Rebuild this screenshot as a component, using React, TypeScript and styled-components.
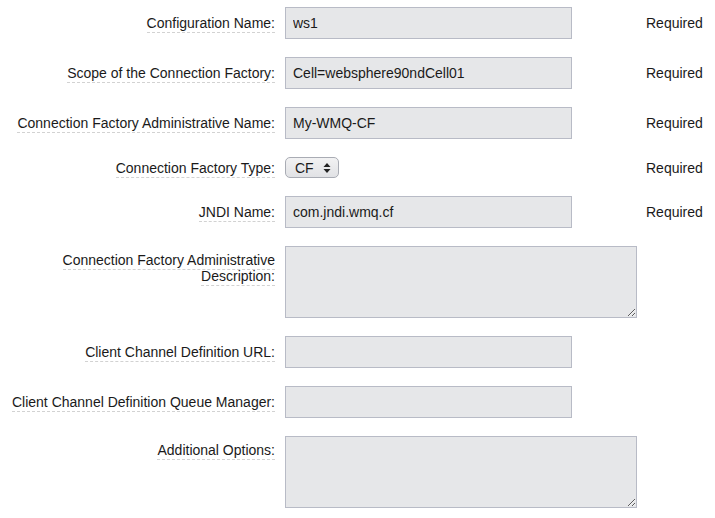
import React from 'react';
import styled, { createGlobalStyle } from 'styled-components';

const GlobalStyle = createGlobalStyle`
  body {
    margin: 0;
    background: #ffffff;
    font-family: "Liberation Sans", Arial, Helvetica, sans-serif;
    font-size: 14px;
    color: #1a1a1a;
  }
`;

type Field = {
  label: string;
  kind: 'input' | 'textarea' | 'select';
  value?: string;
  required?: boolean;
};

const fields: Field[] = [
  { label: 'Configuration Name:', kind: 'input', value: 'ws1', required: true },
  { label: 'Scope of the Connection Factory:', kind: 'input', value: 'Cell=websphere90ndCell01', required: true },
  { label: 'Connection Factory Administrative Name:', kind: 'input', value: 'My-WMQ-CF', required: true },
  { label: 'Connection Factory Type:', kind: 'select', value: 'CF', required: true },
  { label: 'JNDI Name:', kind: 'input', value: 'com.jndi.wmq.cf', required: true },
  { label: 'Connection Factory Administrative Description:', kind: 'textarea' },
  { label: 'Client Channel Definition URL:', kind: 'input' },
  { label: 'Client Channel Definition Queue Manager:', kind: 'input' },
  { label: 'Additional Options:', kind: 'textarea' },
];

const App: React.FC = () => {
  return (
    <>
      <GlobalStyle />
      <Form>
        {fields.map((f) => (
          <Row key={f.label} $top={f.kind === 'textarea'}>
            <Label $top={f.kind === 'textarea'}>
              <LabelText>{f.label}</LabelText>
            </Label>
            <FieldCell>
              {f.kind === 'input' && <TextInput defaultValue={f.value} />}
              {f.kind === 'textarea' && <TextArea />}
              {f.kind === 'select' && (
                <SelectWrap>
                  <Select defaultValue={f.value}>
                    <option>CF</option>
                    <option>QCF</option>
                    <option>TCF</option>
                  </Select>
                  <Arrows width="8" height="12" viewBox="0 0 8 12">
                    <path d="M4 1 L7.5 5 L0.5 5 Z" fill="#222" />
                    <path d="M4 11 L7.5 7 L0.5 7 Z" fill="#222" />
                  </Arrows>
                </SelectWrap>
              )}
            </FieldCell>
            <RequiredCell>{f.required ? 'Required' : ''}</RequiredCell>
          </Row>
        ))}
      </Form>
    </>
  );
};

const Form = styled.form`
  display: flex;
  flex-direction: column;
  gap: 18px;
  padding-top: 7px;
`;

const Row = styled.div<{ $top: boolean }>`
  display: grid;
  grid-template-columns: 275px 352px auto;
  column-gap: 10px;
  align-items: ${({ $top }) => ($top ? 'start' : 'center')};
`;

const Label = styled.label<{ $top: boolean }>`
  display: block;
  text-align: right;
  line-height: 16px;
  padding-top: ${({ $top }) => ($top ? '6px' : '0')};
`;

const LabelText = styled.span`
  border-bottom: 1px dashed #d2d2d2;
  padding-bottom: 1px;
`;

const FieldCell = styled.div`
  display: flex;
  align-items: center;
`;

const fieldBase = `
  box-sizing: border-box;
  background: #e6e7e9;
  border: 1.5px solid #b8bbc6;
  border-radius: 0;
  font-family: "Liberation Sans", Arial, Helvetica, sans-serif;
  font-size: 14px;
  color: #1a1a1a;
  outline: none;
  margin: 0;
`;

const TextInput = styled.input`
  ${fieldBase}
  width: 287px;
  height: 32px;
  padding: 0 7px;
`;

const TextArea = styled.textarea`
  ${fieldBase}
  display: block;
  width: 352px;
  height: 72px;
  padding: 6px 7px;
  resize: both;
`;

const SelectWrap = styled.div`
  position: relative;
  display: inline-block;
`;

const Select = styled.select`
  appearance: none;
  -webkit-appearance: none;
  box-sizing: border-box;
  width: 54px;
  height: 21px;
  padding: 0 0 0 9px;
  margin: 0;
  border: 1px solid #a9acb4;
  border-radius: 5px;
  background: linear-gradient(#f2f2f3, #e1e2e5);
  font-family: "Liberation Sans", Arial, Helvetica, sans-serif;
  font-size: 14px;
  color: #1a1a1a;
  outline: none;
`;

const Arrows = styled.svg`
  position: absolute;
  right: 8px;
  top: 5px;
  pointer-events: none;
`;

const RequiredCell = styled.div`
  margin-left: -1px;
  white-space: nowrap;
`;

export default App;
